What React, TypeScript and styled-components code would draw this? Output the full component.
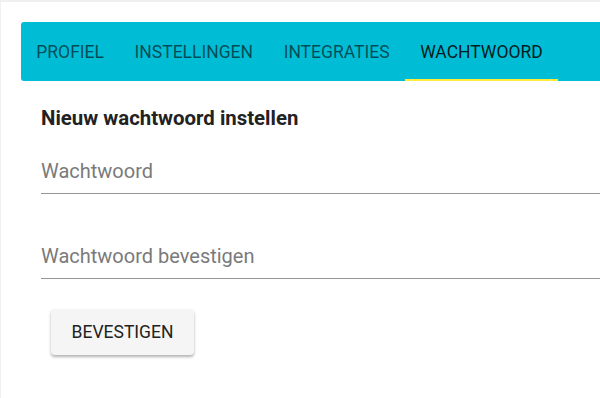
import React from 'react';
import styled, { createGlobalStyle } from 'styled-components';

const GlobalStyle = createGlobalStyle`
    html, body {
        margin: 0;
        padding: 0;
        background: #f0f0f0;
        font-family: Roboto, "Liberation Sans", sans-serif;
    }
`;

const Page = styled.div`
    width: 600px;
    height: 398px;
    padding: 2px 0 0 1px;
    box-sizing: border-box;
    overflow: hidden;
`;

const Card = styled.div`
    background: #ffffff;
    height: 100%;
    padding: 20px 0 0 20px;
    box-sizing: border-box;
`;

const TabBar = styled.nav`
    display: flex;
    height: 59px;
    background: #00bcd4;
    border-radius: 3px 0 0 3px;
`;

const Tab = styled.div<{ $active?: boolean }>`
    position: relative;
    display: flex;
    align-items: center;
    padding: 0 15.3px;
    font-size: 17.5px;
    text-transform: uppercase;
    color: ${({ $active }) => ($active ? 'rgba(0, 0, 0, 0.87)' : 'rgba(0, 0, 0, 0.6)')};
    cursor: pointer;

    &::after {
        content: '';
        display: ${({ $active }) => ($active ? 'block' : 'none')};
        position: absolute;
        left: 0;
        right: 0;
        bottom: 0;
        height: 2px;
        background: #ffeb3b;
    }
`;

const Content = styled.section`
    padding: 25px 0 0 20px;
`;

const Heading = styled.h3`
    margin: 0;
    font-size: 20.4px;
    font-weight: 700;
    color: #222222;
    line-height: 24px;
`;

const FieldRow = styled.div<{ $gap: number }>`
    margin-top: ${({ $gap }) => $gap}px;
`;

const Field = styled.input`
    display: block;
    width: 100%;
    box-sizing: content-box;
    border: none;
    border-bottom: 1px solid #949494;
    padding: 0 0 10px 0;
    height: 24px;
    font-family: inherit;
    font-size: 20px;
    line-height: 24px;
    color: #222;
    background: transparent;
    outline: none;

    &::placeholder {
        color: #7a7a7a;
    }
`;

const Button = styled.button`
    margin: 30px 0 0 10px;
    width: 143px;
    height: 46px;
    border: none;
    border-radius: 4px;
    background: #f5f5f5;
    box-shadow: 0 2px 3px rgba(0, 0, 0, 0.3);
    font-family: inherit;
    font-size: 17.5px;
    color: #222222;
    text-transform: uppercase;
    cursor: pointer;
`;

const tabs = ['Profiel', 'Instellingen', 'Integraties', 'Wachtwoord'];

export default function App() {
    return (
        <>
            <GlobalStyle />
            <Page>
                <Card>
                    <TabBar>
                        {tabs.map((label) => (
                            <Tab key={label} $active={label === 'Wachtwoord'}>{label}</Tab>
                        ))}
                    </TabBar>
                    <Content>
                        <Heading>Nieuw wachtwoord instellen</Heading>
                        <FieldRow $gap={29}>
                            <Field type="password" placeholder="Wachtwoord" />
                        </FieldRow>
                        <FieldRow $gap={50}>
                            <Field type="password" placeholder="Wachtwoord bevestigen" />
                        </FieldRow>
                        <Button>Bevestigen</Button>
                    </Content>
                </Card>
            </Page>
        </>
    );
}
